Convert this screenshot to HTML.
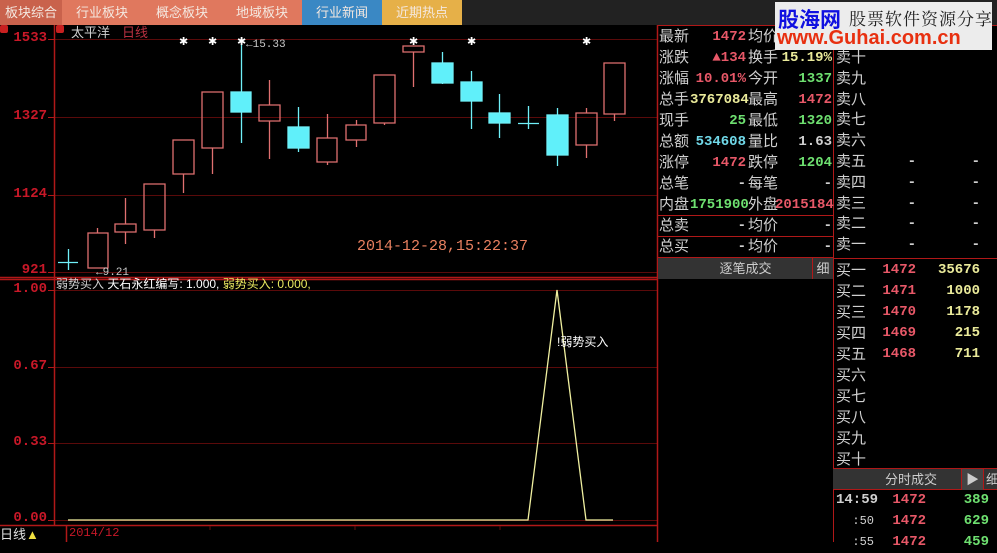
<!DOCTYPE html>
<html><head><meta charset="utf-8"><style>
*{margin:0;padding:0;box-sizing:border-box}
body{width:997px;height:542px;background:#000;overflow:hidden;position:relative;font-family:"Liberation Sans","Noto Sans CJK SC",sans-serif;color:#c8c8c8}
.a{position:absolute;white-space:nowrap}
.tab{position:absolute;top:0;height:25px;line-height:25px;text-align:center;font-size:13px;color:#f4e8e0}
.l{font-size:15px;color:#d0d0d0;line-height:21px}
.n{font-family:"Liberation Mono",monospace;font-weight:bold;font-size:14px;line-height:21px;text-align:right}
.r{color:#e85868}.g{color:#6ee070}.y{color:#eaea9a}.c{color:#70d8e8}.w{color:#d0d0d0}
.ax{font-family:"Liberation Mono",monospace;font-size:14px;font-weight:bold;color:#c81828;text-align:right;width:47px;left:0}
</style></head><body>
<div class="tab" style="left:0;width:62px;background:#c9624c">板块综合</div>
<div class="tab" style="left:62px;width:80px;background:#e0785e">行业板块</div>
<div class="tab" style="left:142px;width:80px;background:#e0785e">概念板块</div>
<div class="tab" style="left:222px;width:80px;background:#e0785e">地域板块</div>
<div class="tab" style="left:302px;width:80px;background:#3a88c4">行业新闻</div>
<div class="tab" style="left:382px;width:80px;background:#e6b048">近期热点</div>
<div class="tab" style="left:462px;width:535px;background:#222"></div>

<svg class="a" style="left:0;top:25px" width="660" height="517" viewBox="0 25 660 517">
<g stroke="#5a0a0a" stroke-width="1">
<line x1="54" y1="39.5" x2="657" y2="39.5"/><line x1="54" y1="117.5" x2="657" y2="117.5"/><line x1="54" y1="195.5" x2="657" y2="195.5"/><line x1="54" y1="272.5" x2="657" y2="272.5"/>
<line x1="54" y1="290.5" x2="657" y2="290.5"/><line x1="54" y1="367.5" x2="657" y2="367.5"/><line x1="54" y1="443.5" x2="657" y2="443.5"/><line x1="54" y1="520.5" x2="657" y2="520.5"/>
</g>
<g stroke="#b01818" stroke-width="1.5">
<line x1="54.5" y1="25" x2="54.5" y2="525"/><line x1="0" y1="277.5" x2="657" y2="277.5"/><line x1="0" y1="279.5" x2="657" y2="279.5"/><line x1="0" y1="525.5" x2="657" y2="525.5"/><line x1="657.5" y1="25" x2="657.5" y2="542"/>
<line x1="66.5" y1="525" x2="66.5" y2="542"/>
</g>
<g stroke="#b01818" stroke-width="1"><line x1="48" y1="39.5" x2="54" y2="39.5"/><line x1="48" y1="117.5" x2="54" y2="117.5"/><line x1="48" y1="195.5" x2="54" y2="195.5"/><line x1="48" y1="272.5" x2="54" y2="272.5"/><line x1="48" y1="290.5" x2="54" y2="290.5"/><line x1="48" y1="367.5" x2="54" y2="367.5"/><line x1="48" y1="443.5" x2="54" y2="443.5"/><line x1="48" y1="520.5" x2="54" y2="520.5"/></g>
<g stroke="#e07070" fill="none" stroke-width="1.3">
<path d="M97.5 228V233M88 233h20v35h-20z"/>
<path d="M125.5 198V224M125.5 232V244M115 224h21v8h-21z"/>
<path d="M154.5 230V238M144 184h21v46h-21z"/>
<path d="M183.5 174V193M173 140h21v34h-21z"/>
<path d="M212.5 148V174M202 92h21v56h-21z"/>
<path d="M269.5 80V105M269.5 121V159M259 105h21v16h-21z"/>
<path d="M327.5 114V138M327.5 162V165M317 138h20v24h-20z"/>
<path d="M356.5 120V125M356.5 140V147M346 125h20v15h-20z"/>
<path d="M384.5 123V125M374 75h21v48h-21z"/>
<path d="M413.5 52V87M403 46h21v6h-21z"/>
<path d="M586.5 108V113M586.5 145V158M576 113h21v32h-21z"/>
<path d="M614.5 114V121M604 63h21v51h-21z"/>
</g>
<g stroke="#70f0f8" fill="#60f0fa" stroke-width="1.3">
<path d="M68.5 249V270M58 262.5h20" fill="none"/>
<path d="M241.5 38V143" fill="none"/><rect x="231" y="92" width="20" height="20"/>
<path d="M298.5 107V152" fill="none"/><rect x="288" y="127" width="21" height="21"/>
<path d="M442.5 52V84" fill="none"/><rect x="432" y="63" width="21" height="20"/>
<path d="M471.5 71V129" fill="none"/><rect x="461" y="82" width="21" height="19"/>
<path d="M499.5 94V138" fill="none"/><rect x="489" y="113" width="21" height="10"/>
<path d="M528.5 106V129M518 123.5h21" fill="none"/>
<path d="M557.5 108V166" fill="none"/><rect x="547" y="115" width="21" height="40"/>
</g>
<g fill="#fff" font-size="11" font-family="Liberation Sans">
<text x="179" y="45">✱</text><text x="208" y="45">✱</text><text x="237" y="45">✱</text><text x="409" y="45">✱</text><text x="467" y="45">✱</text><text x="582" y="45">✱</text>
</g>
<text x="246" y="47" fill="#c8c8c8" font-size="11" font-family="Liberation Mono">←15.33</text>
<text x="96" y="275" fill="#c8c8c8" font-size="11" font-family="Liberation Mono">←9.21</text>
<polyline points="68,520 528,520 557,290 586,520 613,520" fill="none" stroke="#f0f0a0" stroke-width="1.3"/>
<g stroke="#601010"><line x1="210" y1="526" x2="210" y2="530"/><line x1="355" y1="526" x2="355" y2="530"/><line x1="500" y1="526" x2="500" y2="530"/></g>
</svg>
<div class="a" style="left:0;top:25px;width:8px;height:8px;background:#c82020;border-radius:2px"></div>
<div class="a" style="left:56px;top:25px;width:8px;height:8px;background:#c82020;border-radius:2px"></div>
<div class="a" style="left:71px;top:22px;font-size:13px;color:#d0d0d0">太平洋</div>
<div class="a" style="left:122px;top:22px;font-size:13px;color:#b83040">日线</div>
<div class="a ax" style="top:30px">1533</div>
<div class="a ax" style="top:108px">1327</div>
<div class="a ax" style="top:186px">1124</div>
<div class="a ax" style="top:262px">921</div>
<div class="a ax" style="top:281px">1.00</div>
<div class="a ax" style="top:358px">0.67</div>
<div class="a ax" style="top:434px">0.33</div>
<div class="a ax" style="top:510px">0.00</div>
<div class="a" style="left:357px;top:238px;font-family:'Liberation Mono',monospace;font-size:15px;color:#e88060">2014-12-28,15:22:37</div>
<div class="a" style="left:56px;top:275px;font-size:12px;color:#d0d0d0">弱势买入 <span style="color:#fff">天石永红编写: 1.000,</span> <span style="color:#eaea60">弱势买入: 0.000,</span></div>
<div class="a" style="left:557px;top:333px;font-size:12px;color:#fff">!弱势买入</div>
<div class="a" style="left:0;top:524px;font-size:13px;color:#e0e0e0">日线<span style="color:#f0e040">▲</span></div>
<div class="a" style="left:69px;top:526px;font-size:12px;color:#c81828;font-family:'Liberation Mono',monospace">2014/12</div>

<div class="a" style="left:658px;top:25px;width:339px;height:1px;background:#b01818"></div>
<div class="a" style="left:833px;top:25px;width:1px;height:517px;background:#b01818"></div>
<div class="a" style="left:658px;top:215px;width:175px;height:1px;background:#b01818"></div>
<div class="a" style="left:658px;top:236px;width:175px;height:1px;background:#b01818"></div>
<div class="a" style="left:658px;top:257px;width:175px;height:22px;background:#333;border-top:1px solid #b01818;text-align:center;font-size:13px;line-height:21px;color:#ccc">逐笔成交</div>
<div class="a" style="left:812px;top:258px;width:21px;height:21px;border-left:1px solid #b01818;font-size:13px;line-height:21px;text-align:center;color:#ccc">细</div>
<div class="a" style="left:833px;top:258px;width:164px;height:1px;background:#b01818"></div>
<div class="a" style="left:833px;top:468px;width:164px;height:22px;background:#333;border-top:1px solid #b01818;border-bottom:1px solid #b01818;font-size:13px;line-height:21px;color:#ccc"><span class="a" style="left:52px">分时成交</span><span class="a" style="left:128px;width:22px;height:21px;background:#444;text-align:center;border-left:1px solid #b01818">▶</span><span class="a" style="left:150px;width:14px;border-left:1px solid #b01818;padding-left:2px">细</span></div>

<div class="a l" style="left:659px;top:26px">最新<br>涨跌<br>涨幅<br>总手<br>现手<br>总额<br>涨停<br>总笔<br>内盘<br>总卖<br>总买</div>
<div class="a l" style="left:748px;top:26px">均价<br>换手<br>今开<br>最高<br>最低<br>量比<br>跌停<br>每笔<br>外盘<br>均价<br>均价</div>
<div class="a n" style="left:690px;top:27px;width:56px"><span class="r">1472</span><br><span class="r">▲134</span><br><span class="r">10.01%</span><br><span class="y">3767084</span><br><span class="g">25</span><br><span class="c">534608</span><br><span class="r">1472</span><br><span class="w">-</span><br><span class="g">1751900</span><br><span class="w">-</span><br><span class="w">-</span></div>
<div class="a n" style="left:775px;top:27px;width:57px"><span class="r">&nbsp;</span><br><span class="y">15.19%</span><br><span class="g">1337</span><br><span class="r">1472</span><br><span class="g">1320</span><br><span class="w">1.63</span><br><span class="g">1204</span><br><span class="w">-</span><br><span class="r">2015184</span><br><span class="w">-</span><br><span class="w">-</span></div>

<div class="a l" style="left:836px;top:48px;line-height:20.8px">卖十<br>卖九<br>卖八<br>卖七<br>卖六<br>卖五<br>卖四<br>卖三<br>卖二<br>卖一</div>
<div class="a n w" style="left:880px;top:152px;width:36px;line-height:20.8px">-<br>-<br>-<br>-<br>-</div>
<div class="a n w" style="left:950px;top:152px;width:30px;line-height:20.8px">-<br>-<br>-<br>-<br>-</div>
<div class="a l" style="left:836px;top:260px;line-height:21px">买一<br>买二<br>买三<br>买四<br>买五<br>买六<br>买七<br>买八<br>买九<br>买十</div>
<div class="a n r" style="left:880px;top:260px;width:36px;line-height:21px">1472<br>1471<br>1470<br>1469<br>1468</div>
<div class="a n y" style="left:930px;top:260px;width:50px;line-height:21px">35676<br>1000<br>1178<br>215<br>711</div>
<div class="a n w" style="left:836px;top:490px;width:38px;line-height:21px">14:59<br><span style="font-weight:normal;font-size:12px">:50</span><br><span style="font-weight:normal;font-size:12px">:55</span></div>
<div class="a n r" style="left:890px;top:490px;width:36px;line-height:21px">1472<br>1472<br>1472</div>
<div class="a n g" style="left:950px;top:490px;width:39px;line-height:21px">389<br>629<br>459</div>

<div class="a" style="left:775px;top:2px;width:217px;height:48px;background:#ececec">
<div class="a" style="left:3px;top:2px;font-size:21px;font-weight:bold;color:#1010e0">股海网</div>
<div class="a" style="left:74px;top:3px;font-size:17px;color:#222;letter-spacing:1px;font-family:'Noto Serif CJK SC',serif">股票软件资源分享</div>
<div class="a" style="left:2px;top:25px;font-size:20px;font-weight:bold;color:#e83010">www.Guhai.com.cn</div>
</div>
</body></html>
